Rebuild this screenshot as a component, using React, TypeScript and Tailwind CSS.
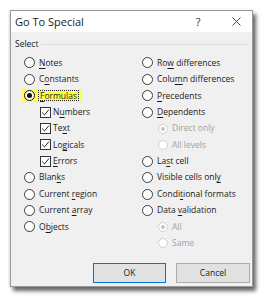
import React from "react";

type Item = {
  pre: string;
  u: string;
  post: string;
};

function Label({ pre, u, post, disabled }: Item & { disabled?: boolean }) {
  return (
    <span className={disabled ? "text-[#a3a3a3]" : "text-[#1b1b1b]"}>
      {pre}
      {u ? <span className="underline underline-offset-[1.5px] decoration-[0.8px]">{u}</span> : null}
      {post}
    </span>
  );
}

function Radio({ checked }: { checked?: boolean }) {
  return (
    <span
      className={
        "flex items-center justify-center w-[11px] h-[11px] rounded-full bg-white shrink-0 " +
        (checked ? "border-[1.5px] border-[#111]" : "border border-[#3a3a3a]")
      }
    >
      {checked ? <span className="w-[5px] h-[5px] rounded-full bg-[#111]" /> : null}
    </span>
  );
}

function DisabledRadio({ checked }: { checked?: boolean }) {
  return (
    <span className="flex items-center justify-center w-[10px] h-[10px] rounded-full bg-white border border-[#d0d0d0] shrink-0">
      {checked ? <span className="w-[4px] h-[4px] rounded-full bg-[#c4c4c4]" /> : null}
    </span>
  );
}

function Check() {
  return (
    <span className="flex items-center justify-center w-[11px] h-[11px] bg-white border border-[#333] shrink-0">
      <svg width="9" height="9" viewBox="0 0 9 9">
        <path d="M1.2 4.6 L3.5 6.9 L7.9 1.6" fill="none" stroke="#222" strokeWidth="1" />
      </svg>
    </span>
  );
}

function Row({ children, className = "" }: { children: React.ReactNode; className?: string }) {
  return <div className={"flex items-center h-[16.4px] " + className}>{children}</div>;
}

function RadioRow(props: Item & { checked?: boolean }) {
  return (
    <Row>
      <Radio checked={props.checked} />
      <span className="ml-[4px]">
        <Label {...props} />
      </span>
    </Row>
  );
}

function CheckRow(props: Item) {
  return (
    <Row className="pl-[16px]">
      <Check />
      <span className="ml-[2px]">
        <Label {...props} />
      </span>
    </Row>
  );
}

function SubRadioRow(props: Item & { checked?: boolean }) {
  return (
    <Row className="pl-[16px]">
      <DisabledRadio checked={props.checked} />
      <span className="ml-[4px]">
        <Label {...props} disabled />
      </span>
    </Row>
  );
}

export default function App() {
  return (
    <div className="w-[266px] h-[300px] bg-white pt-[10px] pl-[10px] font-['Open_Sans',sans-serif] text-[8.5px] leading-none">
      <div className="w-[243px] h-[277px] flex flex-col bg-[#f0f0f0] border border-[#9a9a9a] shadow-[3px_4px_4px_rgba(0,0,0,0.6),-1px_0_2px_rgba(0,0,0,0.12)]">
        {/* title bar */}
        <div className="flex items-center h-[21px] bg-white shrink-0">
          <span className="flex-1 pl-[4px] text-[11px] text-[#1a1a1a]">Go To Special</span>
          <span className="w-[14px] text-center text-[11px] text-[#333]">?</span>
          <span className="ml-[24px] w-[14px] flex items-center justify-center mr-[9px]">
            <svg width="9" height="9" viewBox="0 0 9 9">
              <path d="M0.5 0.5 L8.5 8.5 M8.5 0.5 L0.5 8.5" stroke="#333" strokeWidth="0.9" />
            </svg>
          </span>
        </div>
        {/* body */}
        <div className="flex-1 flex flex-col">
          <div className="flex items-center h-[12px] mt-[6px] pl-[4px] mr-[4px]">
            <span className="text-[#1b1b1b]">Select</span>
            <span className="flex-1 h-px bg-[#dcdcdc] ml-[3px]" />
          </div>
          <div className="flex mt-[4.8px] pl-[13px]">
            <div className="w-[118px] flex flex-col">
              <RadioRow pre="" u="N" post="otes" />
              <RadioRow pre="C" u="o" post="nstants" />
              <Row>
                <span className="flex items-center h-[13px] bg-[#ffff47] -ml-[2px] pl-[2px] pr-[2px]">
                  <Radio checked />
                  <span className="ml-[3px] border border-dotted border-[#222] px-[1px] h-[11px] flex items-center">
                    <Label pre="" u="F" post="ormulas" />
                  </span>
                </span>
              </Row>
              <CheckRow pre="N" u="u" post="mbers" />
              <CheckRow pre="Te" u="x" post="t" />
              <CheckRow pre="Lo" u="g" post="icals" />
              <CheckRow pre="" u="E" post="rrors" />
              <RadioRow pre="Blan" u="k" post="s" />
              <RadioRow pre="Current " u="r" post="egion" />
              <RadioRow pre="Current " u="a" post="rray" />
              <RadioRow pre="O" u="b" post="jects" />
            </div>
            <div className="flex flex-col">
              <RadioRow pre="Ro" u="w" post=" differences" />
              <RadioRow pre="Colu" u="m" post="n differences" />
              <RadioRow pre="" u="P" post="recedents" />
              <RadioRow pre="" u="D" post="ependents" />
              <SubRadioRow pre="Direct only" u="" post="" checked />
              <SubRadioRow pre="All levels" u="" post="" />
              <RadioRow pre="La" u="s" post="t cell" />
              <RadioRow pre="Visible cells onl" u="y" post="" />
              <RadioRow pre="Condi" u="t" post="ional formats" />
              <RadioRow pre="Data " u="v" post="alidation" />
              <SubRadioRow pre="All" u="" post="" checked />
              <SubRadioRow pre="Same" u="" post="" />
            </div>
          </div>
          <div className="mt-auto flex justify-end gap-[10px] pr-[2px] pb-[3px]">
            <button className="w-[73px] h-[20px] bg-[#e1e1e1] border-[1.5px] border-[#0078d7] text-[#1b1b1b] flex items-center justify-center">
              OK
            </button>
            <button className="w-[74px] h-[20px] bg-[#e1e1e1] border border-[#adadad] text-[#1b1b1b] flex items-center justify-center">
              Cancel
            </button>
          </div>
        </div>
      </div>
    </div>
  );
}
